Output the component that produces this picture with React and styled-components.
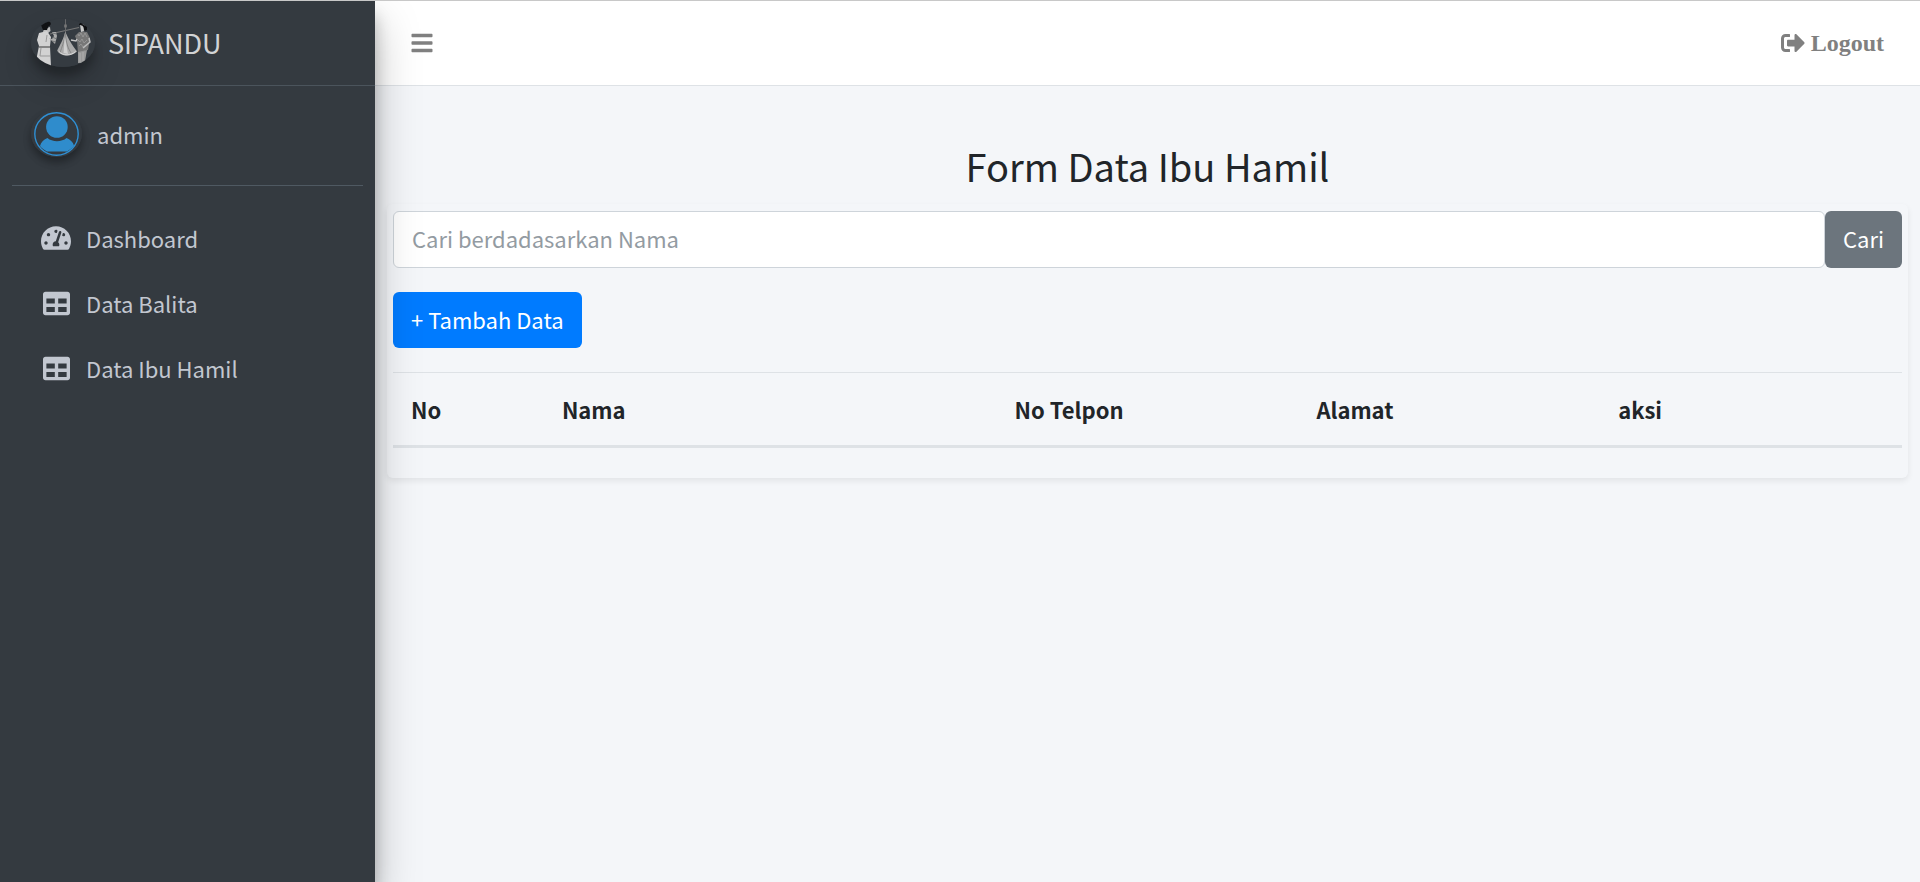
import React, { useState } from "react";
import styled, { createGlobalStyle } from "styled-components";
import { FaBars, FaSignOutAlt, FaTable, FaTachometerAlt } from "react-icons/fa";

const GlobalStyle = createGlobalStyle`
  *, *::before, *::after { box-sizing: border-box; }
  body {
    margin: 0;
    background: #f4f6f9;
    color: #212529;
    font-family: "Noto Sans CJK SC", "Noto Sans", sans-serif;
    font-size: 22px;
    line-height: 36px;
  }
  button, input { font: inherit; }
`;

const Page = styled.div`
  display: flex;
  min-height: 100vh;
  border-top: 1px solid #c8c8c8;
`;

const Sidebar = styled.aside`
  position: relative;
  z-index: 2;
  flex: 0 0 375px;
  background: #343a40;
  box-shadow: 0 21px 42px rgba(0, 0, 0, 0.25), 0 15px 15px rgba(0, 0, 0, 0.22);
  clip-path: inset(0 -80px 0 0);
`;

const Brand = styled.a`
  display: flex;
  align-items: center;
  gap: 13px;
  height: 85px;
  padding: 0 31px;
  border-bottom: 1px solid #4b545c;
  color: rgba(255, 255, 255, 0.8);
  font-size: 27px;
  text-decoration: none;
`;

const Logo = styled.svg`
  width: 64px;
  height: 48px;
  border-radius: 50%;
  box-shadow: 0 15px 30px rgba(0, 0, 0, 0.19), 0 9px 9px rgba(0, 0, 0, 0.23);
`;

const UserPanel = styled.div`
  display: flex;
  align-items: center;
  gap: 15px;
  height: 100px;
  margin: 0 12px;
  padding: 0 19px 4px;
  border-bottom: 1px solid #4f5962;
`;

const Avatar = styled.svg`
  width: 51px;
  height: 47px;
  border-radius: 50%;
  box-shadow: 0 5px 9px rgba(0, 0, 0, 0.23), 0 5px 9px rgba(0, 0, 0, 0.16);
`;

const UserLink = styled.a`
  color: #c2c7d0;
  text-decoration: none;
`;

const Menu = styled.nav`
  display: flex;
  flex-direction: column;
  gap: 5px;
  padding: 22px 12px;
`;

const MenuLink = styled.a`
  display: flex;
  align-items: center;
  gap: 10px;
  height: 60px;
  padding: 0 24px;
  color: #c2c7d0;
  text-decoration: none;
`;

const MenuIcon = styled.span`
  display: flex;
  justify-content: center;
  width: 40px;
  font-size: ${(p) => p.$size};
`;

const Main = styled.main`
  flex: 1;
  min-width: 0;
`;

const Topbar = styled.header`
  display: flex;
  align-items: center;
  justify-content: space-between;
  height: 85px;
  padding: 0 36px 0 35px;
  background: #fff;
  border-bottom: 1px solid #dee2e6;
  color: #808080;
`;

const MenuToggle = styled.button`
  display: flex;
  padding: 0;
  border: 0;
  background: none;
  color: inherit;
  font-size: 24px;
`;

const LogoutLink = styled.a`
  display: flex;
  align-items: center;
  gap: 6px;
  color: inherit;
  font: bold 24px/36px "Liberation Serif", serif;
  text-decoration: none;
`;

const Content = styled.section`
  padding: 54px 12px 24px;
`;

const Title = styled.h1`
  margin: 0 0 12px;
  font-size: 38px;
  font-weight: 400;
  line-height: 52px;
  text-align: center;
`;

const Card = styled.div`
  padding: 7px 6px 30px;
  border-radius: 6px;
  box-shadow: 0 3px 6px rgba(0, 0, 0, 0.075);
`;

const SearchForm = styled.form`
  display: flex;
  height: 57px;
  margin-bottom: 24px;
`;

const SearchInput = styled.input`
  flex: 1;
  min-width: 0;
  padding: 0 18px 3px;
  border: 1px solid #ced4da;
  border-radius: 6px;
  background: #fff;
  color: #495057;
  &::placeholder { color: #939ba2; opacity: 1; }
`;

const Button = styled.button`
  height: ${(p) => (p.$fill ? "100%" : "56px")};
  padding: 0 18px 3px;
  border: 0;
  border-radius: 6px;
  background: ${(p) => p.$color};
  color: #fff;
  cursor: pointer;
`;

const Table = styled.table`
  width: 100%;
  margin-top: 24px;
  border-collapse: separate;
  border-spacing: 0;
  table-layout: fixed;
`;

const HeadCell = styled.th`
  width: ${(p) => p.$width};
  padding: 18px;
  border-top: 1px solid #dee2e6;
  border-bottom: 3px solid #dee2e6;
  font-weight: 700;
  text-align: left;
`;

const menu = [
  { label: "Dashboard", Icon: FaTachometerAlt, size: "30px" },
  { label: "Data Balita", Icon: FaTable, size: "27px" },
  { label: "Data Ibu Hamil", Icon: FaTable, size: "27px" },
];

const columns = [
  { label: "No", width: "10%" },
  { label: "Nama", width: "30%" },
  { label: "No Telpon", width: "20%" },
  { label: "Alamat", width: "20%" },
  { label: "aksi", width: "20%" },
];

// Two women weighing a baby in a hanging scale.
function PosyanduLogo() {
  return (
    <Logo viewBox="31 18 64 48" aria-hidden="true">
      <rect x="31" y="18" width="64" height="48" fill="#353b41" />
      <path d="M50 33 L79 26.5" stroke="#777" strokeWidth="1.1" />
      <path d="M65.5 18 V32" stroke="#68696b" strokeWidth="1" />
      <path d="M64.2 23.5h2.6v3h-2.6z" fill="#777" />
      <path d="M65.3 31 C63 39 60 44 57.2 49.5 C60 55.5 71 56.5 77 50.5 C72 44 69 39 65.3 31z" fill="#aaaaaa" />
      <path d="M65.3 32 C64 41 62 46 60 51.5 M65.5 33 C66 42 68 47 71 52" stroke="#858585" fill="none" />
      <path d="M64.8 35 L63.5 52 L68 53z" fill="#cfcfcf" />
      <path d="M59 50.5 C63 55 71 55 75.5 50.5" stroke="#dadada" fill="none" />
      <path d="M44 28 L50 26 L50.5 30 L47 33 L43 31z" fill="#bcbcbc" />
      <path d="M41 24 C40 20 46 18.5 50 21 C52 23 50 25 48.5 25 L47 29 L43 29z" fill="#101113" />
      <path d="M39 32 L47 30 L51 36 L50 45 L51 66 L37 66 L37 55 L39 45 L37 39z" fill="#d2d2d2" />
      <path d="M39 45 H50 V47 H39z" fill="#858585" />
      <path d="M41 47 L40 55 H50 M47 34 L46 41" stroke="#999" fill="none" />
      <path d="M49 37 L55 43 L57 35 L56 31 L52 31 L54 35 L52 38z" fill="#aaa" />
      <path d="M52 32 L57 33 M52 36 L57 38 M52 40 L56 41" stroke="#66696b" strokeWidth=".8" />
      <path d="M80 23 L85 23 L85 30 L81 31z" fill="#c8c8c8" />
      <path d="M79 24 C79 21 85 20 87 25 L87 29 L84 30 C84 26 83 24 79 24z" fill="#0e0f11" />
      <path d="M79 31 L87 31 L90 37 L88 49 L78 52 L77 40 L75 35z" fill="#777" />
      <path d="M78 33l1 2 2-3 2 4 2-4 2 4 M78 39l2 2 2-3 2 4 3-3 M79 45l2-2 2 3 3-2" stroke="#a1a1a1" strokeWidth=".7" fill="none" />
      <path d="M71 39 L76 40 L77 38" stroke="#c6c6c6" strokeWidth="1.4" fill="none" />
      <path d="M89 37 L90 41 L83 47" stroke="#bbb" strokeWidth="1.5" fill="none" />
      <path d="M78 51 L87 49 L85 60 L83 62 H78z" fill="#999" />
      <path d="M80 52 V61 M83 51 V60" stroke="#b6b6b6" strokeWidth=".8" />
    </Logo>
  );
}

function UserAvatar() {
  return (
    <Avatar viewBox="31 110 51 47" aria-hidden="true">
      <rect x="31" y="110" width="51" height="47" fill="#343a40" />
      <ellipse cx="56.5" cy="134" rx="21.7" ry="21.2" fill="none" stroke="#2f8fd3" strokeWidth="1.4" />
      <circle cx="56.9" cy="127" r="10.8" fill="#2f8ccc" />
      <path d="M40 146 C41 142 44 139.2 47.5 138 C52 142.2 62 142.2 66.5 138 C70 139.5 73 142 74 145.5 C72 148.5 69.5 150 67 151.4 H47 C44 150 42 148.5 40 146z" fill="#2f8ccc" />
    </Avatar>
  );
}

export default function App() {
  const [query, setQuery] = useState("");
  return (
    <>
      <GlobalStyle />
      <Page>
        <Sidebar>
          <Brand href="#">
            <PosyanduLogo />
            SIPANDU
          </Brand>
          <UserPanel>
            <UserAvatar />
            <UserLink href="#">admin</UserLink>
          </UserPanel>
          <Menu aria-label="Menu">
            {menu.map(({ label, Icon, size }) => (
              <MenuLink href="#" key={label}>
                <MenuIcon $size={size}><Icon /></MenuIcon>
                {label}
              </MenuLink>
            ))}
          </Menu>
        </Sidebar>
        <Main>
          <Topbar>
            <MenuToggle type="button" aria-label="Menu"><FaBars /></MenuToggle>
            <LogoutLink href="#"><FaSignOutAlt />Logout</LogoutLink>
          </Topbar>
          <Content>
            <Title>Form Data Ibu Hamil</Title>
            <Card>
              <SearchForm onSubmit={(e) => e.preventDefault()}>
                <SearchInput
                  type="text"
                  aria-label="Cari berdadasarkan Nama"
                  placeholder="Cari berdadasarkan Nama"
                  value={query}
                  onChange={(e) => setQuery(e.target.value)}
                />
                <Button type="submit" $color="#6c757d" $fill>Cari</Button>
              </SearchForm>
              <Button type="button" $color="#007bff">+ Tambah Data</Button>
              <Table>
                <thead>
                  <tr>
                    {columns.map((c) => (
                      <HeadCell key={c.label} scope="col" $width={c.width}>{c.label}</HeadCell>
                    ))}
                  </tr>
                </thead>
              </Table>
            </Card>
          </Content>
        </Main>
      </Page>
    </>
  );
}
